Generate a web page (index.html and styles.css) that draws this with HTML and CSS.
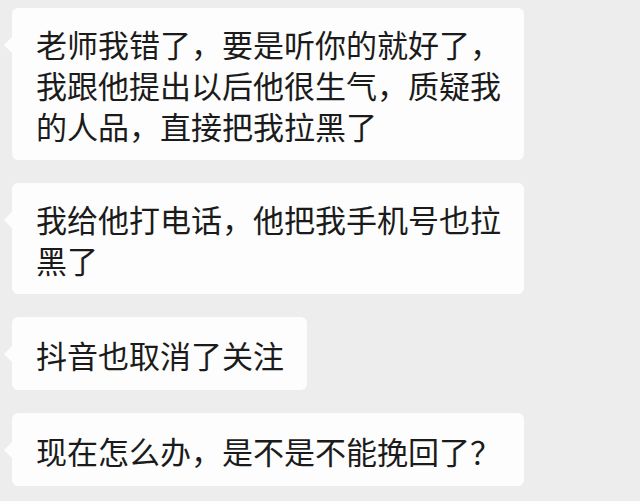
FILE: index.html
```html
<!DOCTYPE html>
<html lang="zh-CN">
<head>
    <meta charset="UTF-8">
    <meta name="viewport" content="width=device-width, initial-scale=1.0">
    <title>聊天记录</title>
    <link rel="stylesheet" href="styles.css">
</head>
<body>
    <div class="chat">
        <div class="bubble">老师我错了，要是听你的就好了，我跟他提出以后他很生气，质疑我的人品，直接把我拉黑了</div>
        <div class="bubble">我给他打电话，他把我手机号也拉黑了</div>
        <div class="bubble single">抖音也取消了关注</div>
        <div class="bubble single">现在怎么办，是不是不能挽回了<span class="qmark">？</span></div>
    </div>
</body>
</html>
```

FILE: styles.css
```css
body {
    margin: 0;
    background: #ededed;
    font-family: "Noto Sans CJK SC", "Noto Sans", sans-serif;
    color: #1b1b1b;
}

.chat {
    display: flex;
    flex-direction: column;
    align-items: flex-start;
    gap: 23px;
    padding: 8px 0 0 12px;
}

.bubble {
    position: relative;
    box-sizing: border-box;
    max-width: 512px;
    padding: 15px 23px 14px 24px;
    background: #fdfdfd;
    border-radius: 6px;
    font-size: 31px;
    line-height: 41px;
}

.bubble.single {
    padding-top: 17px;
    padding-bottom: 15px;
}

/* centred full-width question mark */
.qmark {
    font-family: "Noto Sans CJK JP", "Noto Sans CJK SC", sans-serif;
}

/* little tail on the left */
.bubble::before {
    content: "";
    position: absolute;
    left: -8px;
    top: 29px;
    border-top: 8px solid transparent;
    border-bottom: 8px solid transparent;
    border-right: 8px solid #fdfdfd;
}
```
